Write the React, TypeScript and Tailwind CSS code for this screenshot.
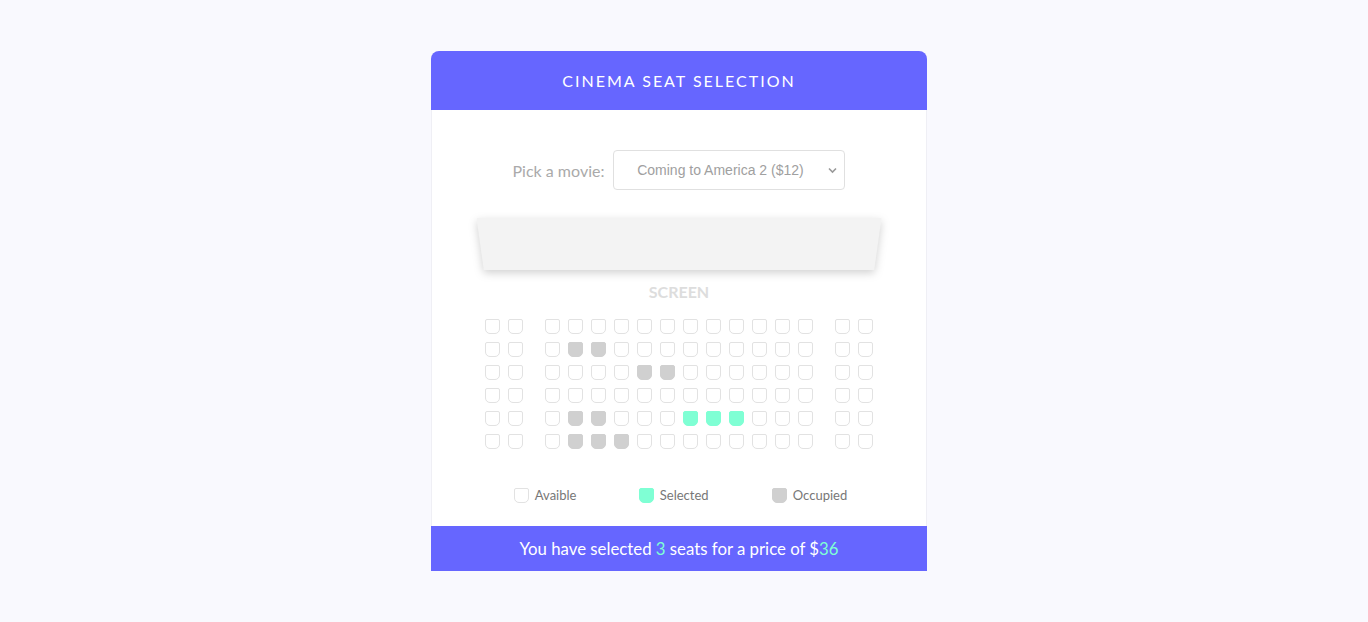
import React from 'react';

const occupied: Record<number, number[]> = { 1: [1, 2], 2: [4, 5], 4: [1, 2], 5: [1, 2, 3] };
const selected: Record<number, number[]> = { 4: [6, 7, 8] };

const Seat = ({ state }: { state?: 'sel' | 'occ' }) => {
  const cls =
    state === 'sel'
      ? 'bg-[#7fffd4] border-[#7fffd4]'
      : state === 'occ'
      ? 'bg-[#d0d0d0] border-[#d0d0d0]'
      : 'bg-white border-[#e2e2e2]';
  return <div className={`w-[15px] h-[15px] border rounded-t-[2px] rounded-b-[5px] ${cls}`} />;
};

const SeatRow = ({ row }: { row: number }) => {
  const stateFor = (col: number) =>
    selected[row]?.includes(col) ? 'sel' : occupied[row]?.includes(col) ? 'occ' : undefined;
  return (
    <div className="flex gap-[22px]">
      <div className="flex gap-2">
        <Seat />
        <Seat />
      </div>
      <div className="flex gap-2">
        {Array.from({ length: 12 }).map((_, i) => (
          <Seat key={i} state={stateFor(i)} />
        ))}
      </div>
      <div className="flex gap-2">
        <Seat />
        <Seat />
      </div>
    </div>
  );
};

export default function App() {
  return (
    <div className="min-h-[622px] bg-[#f9f9fe] pt-[51px] pr-[10px] flex justify-center" style={{ fontFamily: 'Lato, "Open Sans", sans-serif' }}>
      <div className="w-[496px] h-fit">
        <div className="bg-[#6666ff] rounded-t-[8px] h-[59px] flex items-center justify-center">
          <h1 className="text-white text-[16px] tracking-[2px] pt-[1px]">CINEMA SEAT SELECTION</h1>
        </div>

        <div className="bg-white border-x border-[#efeff5] flex flex-col items-center pt-[40px] pb-[20px]">
          <div className="flex items-center gap-[9px]">
            <label className="text-[16px] text-[#aaaaaa] pt-[2px]">Pick a movie:</label>
            <div className="relative w-[232px] h-[40px] border border-[#e0e0e0] rounded-[4px] flex items-center justify-center pr-[18px]">
              <span className="text-[14px] text-[#a0a0a0]" style={{ fontFamily: '"Liberation Sans", Arial, sans-serif' }}>
                Coming to America 2 ($12)
              </span>
              <svg className="absolute right-[7px] top-[16px]" width="9" height="7" viewBox="0 0 9 7" fill="none">
                <path d="M1 1.5 L4.5 5 L8 1.5" stroke="#999" strokeWidth="1.6" />
              </svg>
            </div>
          </div>

          <div className="mt-[28px] w-[405px] h-[52px]" style={{ filter: 'drop-shadow(0 3px 4px rgba(0,0,0,0.18))' }}>
            <div className="w-full h-full bg-[#f3f3f3] [clip-path:polygon(0_0,100%_0,98.2%_100%,1.8%_100%)]" />
          </div>

          <div className="mt-[10px] text-[16px] font-bold text-[#dddddd]">SCREEN</div>

          <div className="mt-[15px] flex flex-col gap-2">
            {Array.from({ length: 6 }).map((_, r) => (
              <SeatRow key={r} row={r} />
            ))}
          </div>

          <div className="mt-[37px] flex items-center text-[13px] text-[#777777] pl-[3px]">
            <div className="flex items-center gap-[6px] w-[125px]">
              <Seat />
              <span>Avaible</span>
            </div>
            <div className="flex items-center gap-[6px] w-[133px]">
              <Seat state="sel" />
              <span>Selected</span>
            </div>
            <div className="flex items-center gap-[6px]">
              <Seat state="occ" />
              <span>Occupied</span>
            </div>
          </div>
        </div>

        <div className="bg-[#6666ff] h-[45px] pt-[2px] flex items-center justify-center text-white text-[16.8px]">
          <p>
            You have selected <span className="text-[#7fffd4]">3</span> seats for a price of $
            <span className="text-[#7fffd4]">36</span>
          </p>
        </div>
      </div>
    </div>
  );
}
